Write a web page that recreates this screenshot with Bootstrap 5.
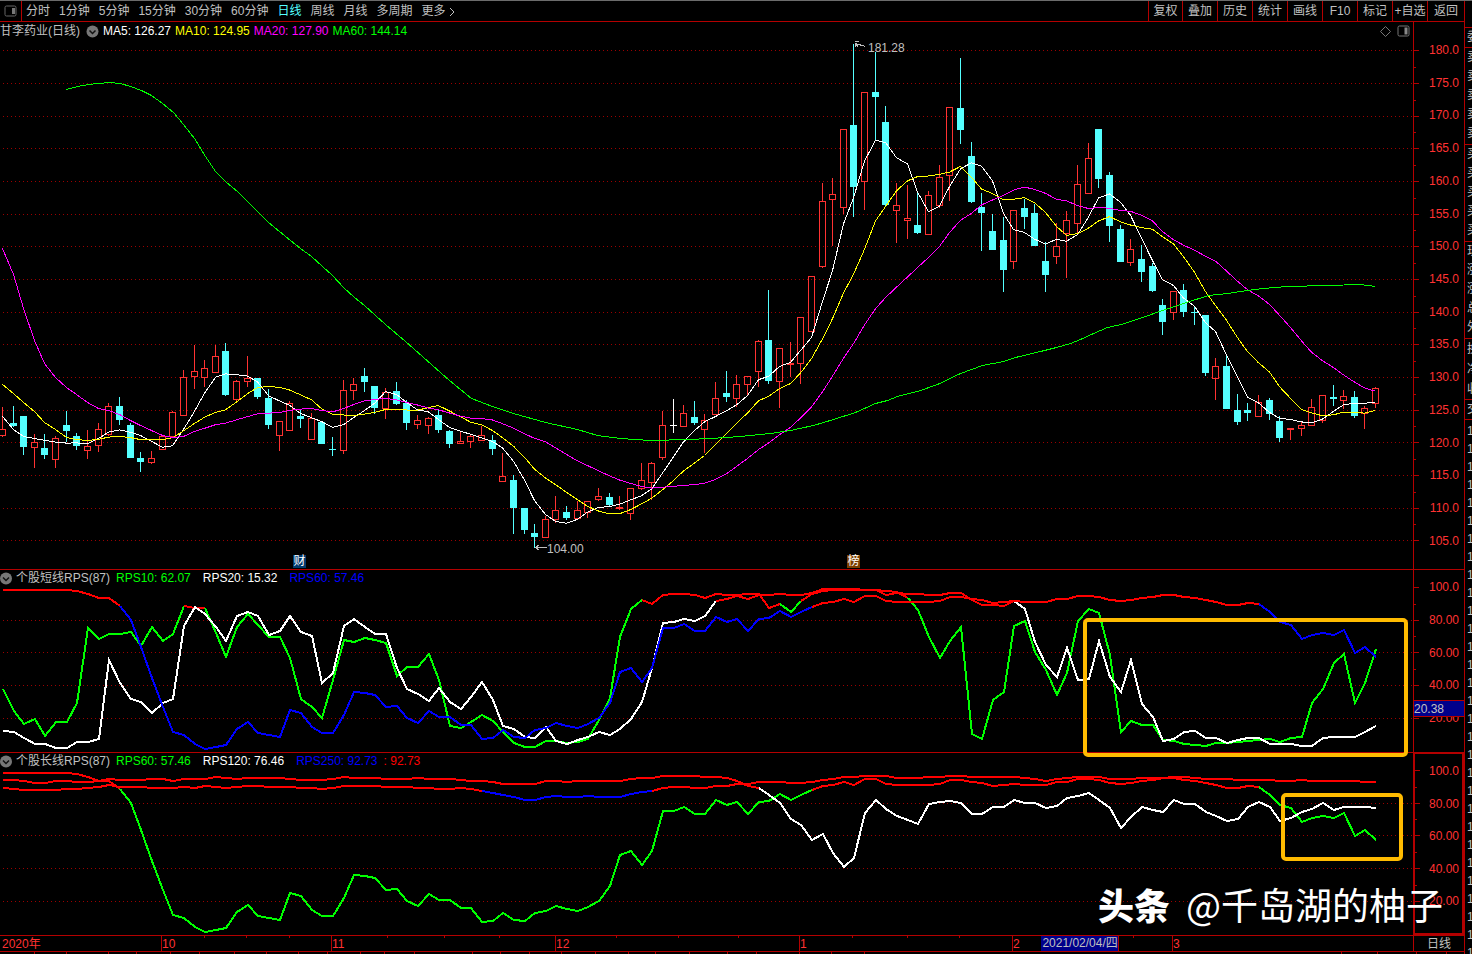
<!DOCTYPE html>
<html lang="zh-CN">
<head>
<meta charset="utf-8">
<meta name="viewport" content="width=device-width, initial-scale=1">
<title>甘李药业(日线)</title>
<link rel="stylesheet" href="https://cdn.jsdelivr.net/npm/bootstrap@5.3.0/dist/css/bootstrap.min.css">
<style>
  :root { --line: #b40000; --red: #ff3232; --grey: #c0c0c0; --navy: #00008b; }
  body { background: #000; color: var(--grey); font: 12px/16px "Liberation Sans", "Noto Sans CJK SC", sans-serif; }
  .terminal { border-top: 1px solid #6b6b6b; }
  .rule-b { border-bottom: 1px solid var(--line); }
  .rule-l { border-left: 1px solid var(--line); }
  .topbar { height: 21px; }
  .topbar button { background: none; border: 0; padding: 1px 0 0; color: inherit; white-space: nowrap; line-height: 19px; }
  .topbar button.current { color: #54ffff; }
  .periods { gap: 9px; padding-left: 4px; }
  .topbar .panel-toggle { width: 21px; padding: 0; }
  .tools button { width: 35px; border-left: 1px solid var(--line); }
  .tools button:first-child { width: 34px; }
  .tools button:last-child { width: 37px; }
  .pane-main { flex: 547 1 0; }
  .pane-sub { flex: 182 1 0; }
  .plot svg.canvas, .axis svg.canvas { position: absolute; inset: 0; width: 100%; height: 100%; overflow: visible; }
  .axis { width: 51px; color: var(--red); }
  .axis.boxed { border: 2px solid var(--line); border-top-width: 1px; }
  .axis ol { margin: 0; padding: 20px 5px 20px 0; list-style: none; text-align: right; position: relative; }
  .pane-sub .axis ol { padding: 9px 5px 26px 0; }
  .pane-sub .axis.boxed ol { padding: 9px 3px 24px 0; }
  .legend { position: relative; white-space: nowrap; height: 16px; gap: 6px; }
  .pane-main .legend { height: 18px; }
  .legend .values { gap: 4px; }
  .legend .wide { margin-left: 6px; }
  .fold { border: 0; padding: 0; background: none; line-height: 0; }
  .pane-main .fold { margin-left: 2px; }
  .c-white { color: #fff; } .c-yellow { color: #ff0; } .c-pink { color: #f0f; }
  .c-green { color: #0f0; } .c-blue { color: #00f; } .c-red { color: #f00; }
  .corner { padding-right: 3px; gap: 6px; }
  .note { position: absolute; line-height: 14px; }
  .tag { position: absolute; width: 13px; height: 13px; line-height: 13px; color: #fff; text-align: center; bottom: 1px; }
  .tag-report { left: 20.74%; background: #003a6e; }
  .tag-rank { left: 59.94%; background: #7c3f00; }
  .note-high { left: 61.43%; top: 19px; }
  .note-low { left: 38.71%; bottom: 13px; }
  .cursor-value { position: absolute; left: 0; right: 0; top: 71.4%; height: 17px; background: var(--navy); color: var(--grey); border: solid var(--line); border-width: 1px 0; }
  .timeline { height: 16px; color: var(--red); }
  .timeline span { position: absolute; top: 0; padding-left: 1px; }
  .timeline .cursor-date { left: 73.7%; background: var(--navy); color: var(--grey); border-right: 1px solid var(--line); white-space: nowrap; height: 15px; line-height: 15px; }
  .timeline .period { width: 51px; color: var(--grey); }
  .footer-ticks { height: 2px; }
  .strip { width: 8px; overflow: hidden; }
  .strip div { border-bottom: 1px solid var(--line); padding-left: 2px; line-height: 19px; }
  .strip .first { height: 20px; }
  .strip .title-gap { height: 27px; }
  .strip .group5 { height: 97px; }
  .strip .group3 { height: 61px; line-height: 20px; }
  .strip .ticks { line-height: 18px; border: 0; padding-top: 2px; }
  .watermark { position: absolute; right: 29px; bottom: 22px; color: #fff; font: 37px/56px "Noto Sans CJK SC", sans-serif; white-space: nowrap; }
  .watermark strong { font-weight: 900; font-size: 36px; margin-right: 16px; }
</style>
</head>
<body>
<div class="terminal d-flex vh-100 overflow-hidden position-relative">
  <main class="d-flex flex-column flex-grow-1 overflow-hidden">
    <nav class="topbar rule-b d-flex justify-content-between flex-shrink-0">
      <div class="d-flex">
        <button class="panel-toggle" aria-label="侧栏"><svg width="13" height="12" viewBox="0 0 13 12"><rect x="1" y="1" width="11" height="10" rx="1.5" fill="none" stroke="#666"/><path d="M8 3h3v6H8z" fill="#777"/></svg></button>
        <div class="periods rule-l d-flex">
          <button>分时</button><button>1分钟</button><button>5分钟</button><button>15分钟</button><button>30分钟</button><button>60分钟</button><button class="current">日线</button><button>周线</button><button>月线</button><button>多周期</button><button>更多 <svg width="6" height="10" viewBox="0 0 6 10"><path d="M1 1l4 4-4 4" fill="none" stroke="#c0c0c0"/></svg></button>
        </div>
      </div>
      <div class="tools d-flex">
        <button>复权</button><button>叠加</button><button>历史</button><button>统计</button><button>画线</button><button>F10</button><button>标记</button><button>+自选</button><button>返回</button>
      </div>
    </nav>

    <section class="pane-main rule-b d-flex">
      <div class="plot flex-grow-1 position-relative">
        <svg class="canvas" id="kline" viewBox="0 22 1413 547" preserveAspectRatio="none" shape-rendering="crispEdges"></svg>
        <div class="legend d-flex align-items-center justify-content-between">
          <div class="values d-flex align-items-center">
            <span>甘李药业(日线)</span>
            <button class="fold" aria-label="指标"><svg width="13" height="13" viewBox="0 0 13 13"><circle cx="6.500" cy="6.500" r="6" fill="#777"/><path d="M3.500 5.500l3 3 3-3" fill="none" stroke="#111" stroke-width="1.500"/></svg></button>
            <span class="c-white">MA5: 126.27</span><span class="c-yellow">MA10: 124.95</span><span class="c-pink">MA20: 127.90</span><span class="c-green">MA60: 144.14</span>
          </div>
          <div class="corner d-flex align-items-center">
            <svg width="11" height="11" viewBox="0 0 11 11"><path d="M5.500.5l5 5-5 5-5-5z" fill="none" stroke="#777"/></svg>
            <svg width="13" height="12" viewBox="0 0 13 12"><rect x="1" y="1" width="11" height="10" rx="1.500" fill="none" stroke="#777"/><path d="M7.500 2.500h3v7h-3z" fill="#888"/></svg>
          </div>
        </div>
        <span class="note note-high">181.28</span>
        <span class="note note-low">104.00</span>
        <span class="tag tag-report">财</span>
        <span class="tag tag-rank">榜</span>
      </div>
      <div class="axis rule-l position-relative d-flex flex-column">
        <svg class="canvas" id="axis1" viewBox="1414 22 50 547" preserveAspectRatio="none" shape-rendering="crispEdges"></svg>
        <ol class="flex-grow-1 d-flex flex-column justify-content-between"><li>180.0</li><li>175.0</li><li>170.0</li><li>165.0</li><li>160.0</li><li>155.0</li><li>150.0</li><li>145.0</li><li>140.0</li><li>135.0</li><li>130.0</li><li>125.0</li><li>120.0</li><li>115.0</li><li>110.0</li><li>105.0</li></ol>
      </div>
    </section>

    <section class="pane-sub rule-b d-flex">
      <div class="plot flex-grow-1 position-relative">
        <svg class="canvas" id="short" viewBox="0 570 1413 182" preserveAspectRatio="none" shape-rendering="crispEdges"></svg>
        <div class="legend d-flex align-items-center">
          <div class="values d-flex align-items-center">
            <button class="fold" aria-label="指标"><svg width="12" height="13" viewBox="0 0 12 13"><circle cx="6" cy="6.500" r="6" fill="#777"/><path d="M3 5.500l3 3 3-3" fill="none" stroke="#111" stroke-width="1.500"/></svg></button>
            <span>个股短线RPS(87)</span>
          </div>
          <span class="c-green">RPS10: 62.07</span><span class="c-white wide">RPS20: 15.32</span><span class="c-blue wide">RPS60: 57.46</span>
        </div>
      </div>
      <div class="axis rule-l position-relative d-flex flex-column">
        <svg class="canvas" id="axis2" viewBox="1414 570 50 182" preserveAspectRatio="none" shape-rendering="crispEdges"></svg>
        <ol class="flex-grow-1 d-flex flex-column justify-content-between"><li>100.0</li><li>80.00</li><li>60.00</li><li>40.00</li><li>20.00</li></ol>
        <span class="cursor-value">20.38</span>
      </div>
    </section>

    <section class="pane-sub rule-b d-flex">
      <div class="plot flex-grow-1 position-relative">
        <svg class="canvas" id="long" viewBox="0 753 1413 182" preserveAspectRatio="none" shape-rendering="crispEdges"></svg>
        <div class="legend d-flex align-items-center">
          <div class="values d-flex align-items-center">
            <button class="fold" aria-label="指标"><svg width="12" height="13" viewBox="0 0 12 13"><circle cx="6" cy="6.500" r="6" fill="#777"/><path d="M3 5.500l3 3 3-3" fill="none" stroke="#111" stroke-width="1.500"/></svg></button>
            <span>个股长线RPS(87)</span>
          </div>
          <span class="c-green">RPS60: 57.46</span><span class="c-white wide">RPS120: 76.46</span><span class="c-blue wide">RPS250: 92.73</span><span class="c-red">: 92.73</span>
        </div>
      </div>
      <div class="axis boxed position-relative d-flex flex-column">
        <svg class="canvas" id="axis3" viewBox="1415 754 47 179" preserveAspectRatio="none" shape-rendering="crispEdges"></svg>
        <ol class="flex-grow-1 d-flex flex-column justify-content-between"><li>100.0</li><li>80.00</li><li>60.00</li><li>40.00</li><li>20.00</li></ol>
      </div>
    </section>

    <div class="timeline rule-b d-flex flex-shrink-0">
      <div class="plot flex-grow-1 position-relative" id="months">
        <svg class="canvas" id="ticks" viewBox="0 936 1413 15" preserveAspectRatio="none" shape-rendering="crispEdges"></svg>
      </div>
      <div class="period rule-l text-center">日线</div>
    </div>
    <div class="footer-ticks flex-shrink-0 position-relative plot">
      <svg class="canvas" id="subticks" viewBox="0 952 1464 2" preserveAspectRatio="none" shape-rendering="crispEdges"></svg>
    </div>
  </main>

  <aside class="strip rule-l flex-shrink-0">
    <div class="title-gap"></div>
    <div class="first">委</div>
    <div class="group5">卖<br>卖<br>卖<br>卖<br>卖</div>
    <div class="group5">买<br>买<br>买<br>买<br>买</div>
    <div class="group5">现<br>涨<br>涨<br>总<br>外</div>
    <div class="group3">换<br>净<br>收</div>
    <div class="first">交</div>
    <div class="ticks" id="deals"></div>
  </aside>
  <div class="watermark"><strong>头条</strong>@千岛湖的柚子</div>
</div>
<script src="https://cdn.jsdelivr.net/npm/bootstrap@5.3.0/dist/js/bootstrap.bundle.min.js"></script>
<script>
// One entry per day: kind (r rise, c fall, w flat), high, body top, body bottom, low
const days = `r 407 429 436 437;c 406 423 426 427;c 416 416 447 455;r 434 442 448 468;c 434 448 455 459;r 436 438 460 468;c 411 425 431 442;c 433 436 446 450;r 430 446 451 459;r 423 429 446 452
r 403 406 435 436;c 397 406 420 425;c 423 425 458 458;c 452 458 462 472;r 451 458 463 464;r 435 436 450 450;r 411 412 437 437;r 370 377 416 416;r 345 371 377 389;r 360 368 378 387
r 345 356 373 373;c 343 351 395 396;r 380 381 400 401;r 356 378 382 387;c 378 378 397 399;c 389 398 425 429;r 421 421 436 451;r 401 403 431 431;c 410 416 419 428;r 413 418 440 440
c 421 422 444 444;c 437 449 450 456;r 380 390 451 454;r 378 384 391 400;c 368 376 382 392;c 386 386 408 414;r 388 392 409 419;c 382 391 404 405;c 400 403 423 430;r 415 420 425 429
r 417 418 426 434;c 410 415 430 433;c 430 431 444 448;r 431 441 444 444;r 435 436 442 448;r 426 435 441 441;c 435 440 449 455;r 453 476 482 482;c 475 480 508 534;c 508 508 530 534
c 524 533 537 548;r 516 519 538 538;r 496 510 520 523;c 506 512 518 520;r 501 510 519 519;r 501 501 513 518;r 488 496 500 501;c 493 497 505 507;r 496 507 509 510;r 488 488 514 520
r 463 480 489 490;r 462 463 483 500;r 411 425 458 460;w 399 425 426 433;r 405 413 427 427;c 401 417 423 425;r 414 420 430 453;r 382 398 415 415;c 371 393 397 402;r 375 384 399 407
r 376 376 385 395;r 340 341 372 387;c 290 340 381 384;r 348 348 382 408;r 342 363 365 377;r 317 317 364 384;r 276 276 332 332;r 183 201 267 268;r 178 194 200 246;r 129 129 208 214
c 44 125 187 217;r 92 92 182 210;c 52 92 97 141;c 106 122 205 206;r 183 205 211 243;r 185 218 221 239;c 192 225 233 234;r 191 195 235 235;r 165 177 206 208;r 107 107 176 201
c 58 108 130 144;c 142 156 202 203;c 193 207 213 251;c 214 231 250 250;c 217 240 270 292;r 210 210 262 269;c 199 208 217 229;c 204 213 246 246;c 242 261 275 292;r 223 246 257 264
r 211 220 234 278;r 165 184 224 234;r 143 158 194 194;c 129 129 179 188;c 172 175 226 242;c 225 229 262 262;r 239 249 263 266;c 245 259 272 282;c 263 266 291 292;c 299 305 322 335
r 291 291 313 320;c 284 290 312 317;c 307 312 313 325;c 315 315 373 376;r 358 366 379 400;c 354 366 409 409;c 394 410 422 425;c 403 410 413 421;r 395 402 417 417;c 398 400 414 420
c 416 421 438 442;r 428 428 430 440;r 421 425 429 436;r 399 407 426 426;r 395 395 421 423;c 385 397 399 406;r 390 396 401 409;c 391 397 416 418;r 406 408 414 429;r 387 388 404 408`
  .split(/[;\n]/).map(d => { const [k, ...v] = d.trim().split(' '); return [k, ...v.map(Number)]; });

const xs = i => Math.floor(2.4 + 10.645 * i);
const nums = s => s.trim().split(/\s+/).map(Number);
const closes = days.map(([k, , top, bottom]) => k === 'r' ? top : bottom);
const average = (n, head) => closes.map((c, i) =>
  i < head.length ? head[i] : closes.slice(i - n + 1, i + 1).reduce((a, b) => a + b) / n);
const line = (pts, color, w) =>
  `<polyline points="${pts.map(p => p.join()).join(' ')}" fill="none" stroke="${color}" stroke-width="${w}"/>`;
const series = (ys, color) => line(ys.map((y, i) => [xs(i) + .5, y + .5]), color, 1);
const grid = ys => ys.map(y =>
  `<path d="M3 ${y + .5}H1413" stroke="#9c0000" stroke-dasharray="1 3"/>`).join('');

const priceYs = [50, 83, 116, 148, 181, 214, 246, 279, 312, 344, 377, 410, 442, 475, 508, 540];
let k = grid(priceYs);
days.forEach(([kind, high, top, bottom, low], i) => {
  const x = xs(i), color = { r: '#ff3232', c: '#54ffff', w: '#fff' }[kind];
  k += `<path d="M${x + .5} ${high}V${top}M${x + .5} ${bottom}V${low}" stroke="${color}"/>`;
  k += kind === 'r'
    ? `<rect x="${x - 2.5}" y="${top + .5}" width="6" height="${Math.max(bottom - top - 1, 1)}" fill="none" stroke="${color}"/>`
    : `<rect x="${x - 3}" y="${top}" width="7" height="${bottom - top}" fill="${color}"/>`;
});
k += series(average(5, [416, 429, 436, 438]), '#fff');
k += series(average(10, [384, 393, 402, 411, 422, 429, 437, 439, 440]), '#ff0');
k += series(average(20, [248, 274, 308, 340, 363, 377, 387, 394, 402, 408, 410, 414, 420, 425, 430, 435, 437, 436, 431]), '#f0f');
k += line([[66,89],[77,86],[88,84],[98,83],[109,82],[120,83],[130,86],[141,90],[151,95],[162,103],[173,112],[183,124],[194,138],[205,156],[215,171],[226,182],[237,191],[247,201],[258,212],[268,222],[279,231],[290,240],[300,248],[311,256],[322,266],[332,275],[343,287],[354,297],[364,305],[375,315],[385,324],[405,341],[449,380],[471,398],[492,406],[513,413],[545,422],[577,429],[597,435],[620,438],[650,440],[687,439],[710,438],[740,436],[770,433],[790,430],[813,425],[833,419],[855,412],[875,403],[887,400],[897,396],[920,390],[937,384],[960,373],[982,365],[1003,361],[1015,357],[1040,351],[1056,347],[1070,343],[1080,339],[1093,333],[1107,327],[1121,324],[1142,317],[1162,310],[1183,303],[1208,295],[1227,293],[1247,290],[1263,288],[1287,286],[1327,285],[1360,284],[1375,286]].map(p => [p[0] + .5, p[1] + .5]), '#0f0', 1);
k += '<path d="M855.500 43.500l10 3M855 41.500h4M855.500 43v4M855.500 43.500l3 4M535.500 547.500h11M535.500 547.500l4-3M535.500 547.500l4 3" fill="none" stroke="#c0c0c0"/>';
document.getElementById('kline').innerHTML = k;

// Relative-strength curves turn red while they stay above 87
const strength = (ys, color, limit) => {
  let out = '', from = 0;
  const hot = i => ys[i] <= limit && ys[i + 1] <= limit;
  for (let i = 1; i < ys.length; i++)
    if (i === ys.length - 1 || hot(i) !== hot(from)) {
      out += line(ys.slice(from, i + 1).map((y, j) => [xs(from + j) + 1, y]), hot(from) ? '#f00' : color, 2);
      from = i;
    }
  return out;
};
const rps10 = nums(`689 711 724 719 736 722 722 703 628 639 634 634 632 646 627 641 634 606 608 608 633 657 627 614 625 637 637 658 699 707
718 680 640 642 638 640 643 676 667 667 654 680 726 728 722 715 721 732 743 747 747 741 741 743 742 739 720 698 637 609
600 604 595 594 594 595 598 594 595 595 594 594 608 604 612 601 594 591 590 590 590 590 590 591 592 598 610 637 658 641
627 734 739 700 692 626 621 652 670 695 673 621 609 613 655 732 721 725 725 740 741 744 745 746 743 743 742 741 740 739
742 738 737 703 689 663 654 703 683 649`);
const rps20 = nums(`731 732 738 744 744 748 748 742 742 739 660 683 699 702 713 703 699 626 607 614 627 641 616 612 616 635 631 616 632 636
683 673 626 619 627 634 634 668 689 694 701 688 702 709 697 682 700 726 729 737 738 727 741 744 740 737 732 735 729 719
702 668 623 622 619 621 616 601 599 596 599 595 595 594 595 595 593 589 589 589 589 590 590 595 593 594 594 595 595 593
593 600 605 605 606 601 609 642 665 677 648 680 679 641 677 692 660 704 717 741 739 732 731 738 738 743 740 738 738 744
744 744 746 746 738 737 737 737 732 726`);
const rps60 = nums(`590 590 590 590 590 590 590 591 594 598 598 606 620 647 678 707 732 735 744 749 747 745 729 722 733 735 737 710 713 727
733 733 715 692 693 695 707 706 718 723 711 717 717 725 725 739 738 730 737 738 730 728 723 726 728 724 718 703 672 668
682 668 628 628 624 631 631 617 622 619 631 619 618 611 617 612 607 603 602 599 602 596 596 601 602 602 602 602 601 597
597 599 600 603 602 601 602 602 602 599 599 596 596 597 600 601 600 598 597 595 595 597 598 600 602 605 605 603 604 612
622 625 639 635 633 635 630 653 647 657`);
const rps120 = nums(`780 780 781 783 783 781 781 782 782 781 779 780 780 780 779 779 781 779 779 779 777 778 779 778 778 778 778 779 780 780
780 779 777 778 778 778 779 779 779 778 779 779 779 780 781 781 782 784 784 784 784 781 781 782 781 781 781 781 781 779
778 778 776 776 776 776 777 777 778 781 786 788 795 803 819 825 840 834 853 867 858 813 800 809 816 820 824 804 802 801
803 814 814 807 807 800 803 803 808 806 798 796 793 800 808 828 817 807 810 812 800 804 804 812 816 821 819 807 802 807
821 818 812 809 803 810 807 807 807 808`);
const rps250 = nums(`788 789 790 790 790 790 789 789 788 787 785 787 787 787 788 788 788 787 788 786 787 788 787 786 786 787 787 787 788 788
789 788 786 786 786 786 787 787 787 788 788 789 789 788 789 791 793 795 797 800 800 797 796 797 797 796 797 797 797 794
792 791 788 787 787 788 788 786 786 784 784 782 782 782 783 783 782 780 779 777 777 776 776 776 778 778 778 777 777 776
776 777 777 777 777 777 778 779 781 779 778 777 777 777 779 779 779 778 778 778 777 777 778 779 779 779 780 780 780 780
781 781 780 781 781 781 781 781 782 782`);
const frame = (x, y, w, h) =>
  `<rect x="${x}" y="${y}" width="${w}" height="${h}" rx="3" fill="none" stroke="#fb0" stroke-width="4" shape-rendering="auto"/>`;

document.getElementById('short').innerHTML = grid([620, 652, 685, 718])
  + strength(rps10, '#0f0', 608) + strength(rps20, '#fff', 608) + strength(rps60, '#00f', 608)
  + frame(1085, 620, 321, 135);
document.getElementById('long').innerHTML = grid([803, 835, 868, 901])
  + strength(rps60.map(y => y + 183), '#0f0', 791) + strength(rps120, '#fff', 791) + strength(rps250, '#00f', 791)
  + frame(1283, 795, 118, 64);

// Scale marks: a long one at each label and a short one half-way
const marks = (id, ys, x) => document.getElementById(id).innerHTML = ys.map((y, i) =>
  `<path d="M${x} ${y + .5}h5${i < ys.length - 1 ? `M${x} ${Math.round((y + ys[i + 1]) / 2) + .5}h2` : ''}" stroke="#b40000"/>`).join('');
marks('axis1', priceYs, 1414);
marks('axis2', [587, 620, 652, 685, 718], 1414);
marks('axis3', [770, 803, 835, 868, 901], 1415);

const months = [[1, '2020年'], [161, '10'], [331, '11'], [555, '12'], [799, '1'], [1012, '2'], [1172, '3']];
document.getElementById('ticks').innerHTML =
  months.slice(1).map(m => `<path d="M${m[0] + .5} 936v15" stroke="#b40000"/>`).join('')
  + [204, 246, 289, 387, 444, 499, 616, 678, 738, 852, 907, 959, 1133].map(x => `<path d="M${x + .5} 936v2" stroke="#b40000"/>`).join('');
document.getElementById('months').insertAdjacentHTML('beforeend',
  months.map(m => `<span style="left:${m[0] / 14.13}%">${m[1]}</span>`).join('') + '<span class="cursor-date">2021/02/04/四</span>');
document.getElementById('subticks').innerHTML =
  [34, 66, 108, 136, 170, 199, 234, 266, 298, 327, 360, 384, 414, 472, 500, 529, 561, 595, 628, 655, 689, 727, 756, 799, 831, 864, 1341, 1377, 1416, 1446]
    .map(x => `<path d="M${x + .5} 952v2" stroke="#b40000"/>`).join('');
document.getElementById('deals').innerHTML = Array(30).fill('1').join('<br>');
</script>
</body>
</html>
